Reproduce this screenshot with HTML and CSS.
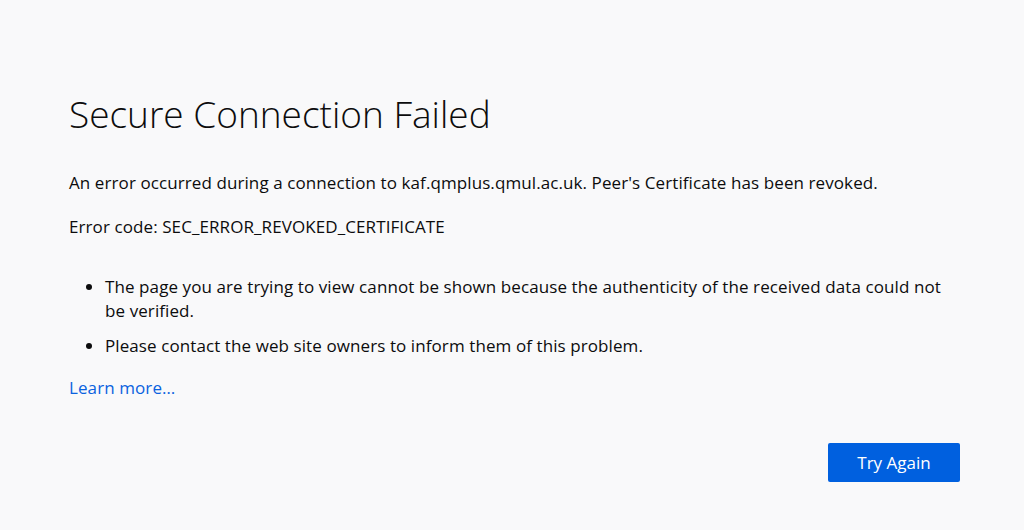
FILE: index.html
```html
<!DOCTYPE html>
<html lang="en">
<head>
<meta charset="utf-8">
<title>Secure Connection Failed</title>
<link rel="stylesheet" href="styles.css">
</head>
<body>
<main class="container">
  <h1 class="title">Secure Connection Failed</h1>
  <p class="desc">An error occurred during a connection to kaf.qmplus.qmul.ac.uk. Peer's Certificate has been revoked.</p>
  <p class="code">Error code: SEC_ERROR_REVOKED_CERTIFICATE</p>
  <ul class="reasons">
    <li>The page you are trying to view cannot be shown because the authenticity of the received data could not be verified.</li>
    <li>Please contact the web site owners to inform them of this problem.</li>
  </ul>
  <a class="learn" href="#">Learn more…</a>
  <div class="actions">
    <button class="primary">Try Again</button>
  </div>
</main>
</body>
</html>
```
FILE: styles.css
```css
html, body {
  margin: 0;
  padding: 0;
  height: 100%;
}
body {
  background: #f9f9fa;
  color: #0c0c0d;
  font-family: "Open Sans", "Noto Sans", sans-serif;
  font-size: 17px;
  letter-spacing: 0.09px;
}
.container {
  width: 891px;
  padding: 90px 0 0 69px;
  display: flex;
  flex-direction: column;
}
.title {
  margin: 0;
  font-size: 37px;
  font-weight: 300;
  line-height: 48px;
  letter-spacing: 0;
}
.desc {
  margin: 33px 0 0;
  line-height: 24px;
}
.code {
  margin: 20px 0 0;
  line-height: 24px;
}
.reasons {
  margin: 36px 0 0;
  padding-left: 36px;
  line-height: 24px;
}
.reasons li + li {
  margin-top: 11px;
}
.learn {
  margin-top: 18px;
  color: #0a62df;
  text-decoration: none;
  line-height: 24px;
  align-self: flex-start;
}
.actions {
  display: flex;
  justify-content: flex-end;
  margin-top: 43px;
}
.primary {
  width: 132px;
  height: 39px;
  border: none;
  border-radius: 2px;
  background: #0060df;
  color: #fff;
  font-family: inherit;
  font-size: 17px;
}
```
